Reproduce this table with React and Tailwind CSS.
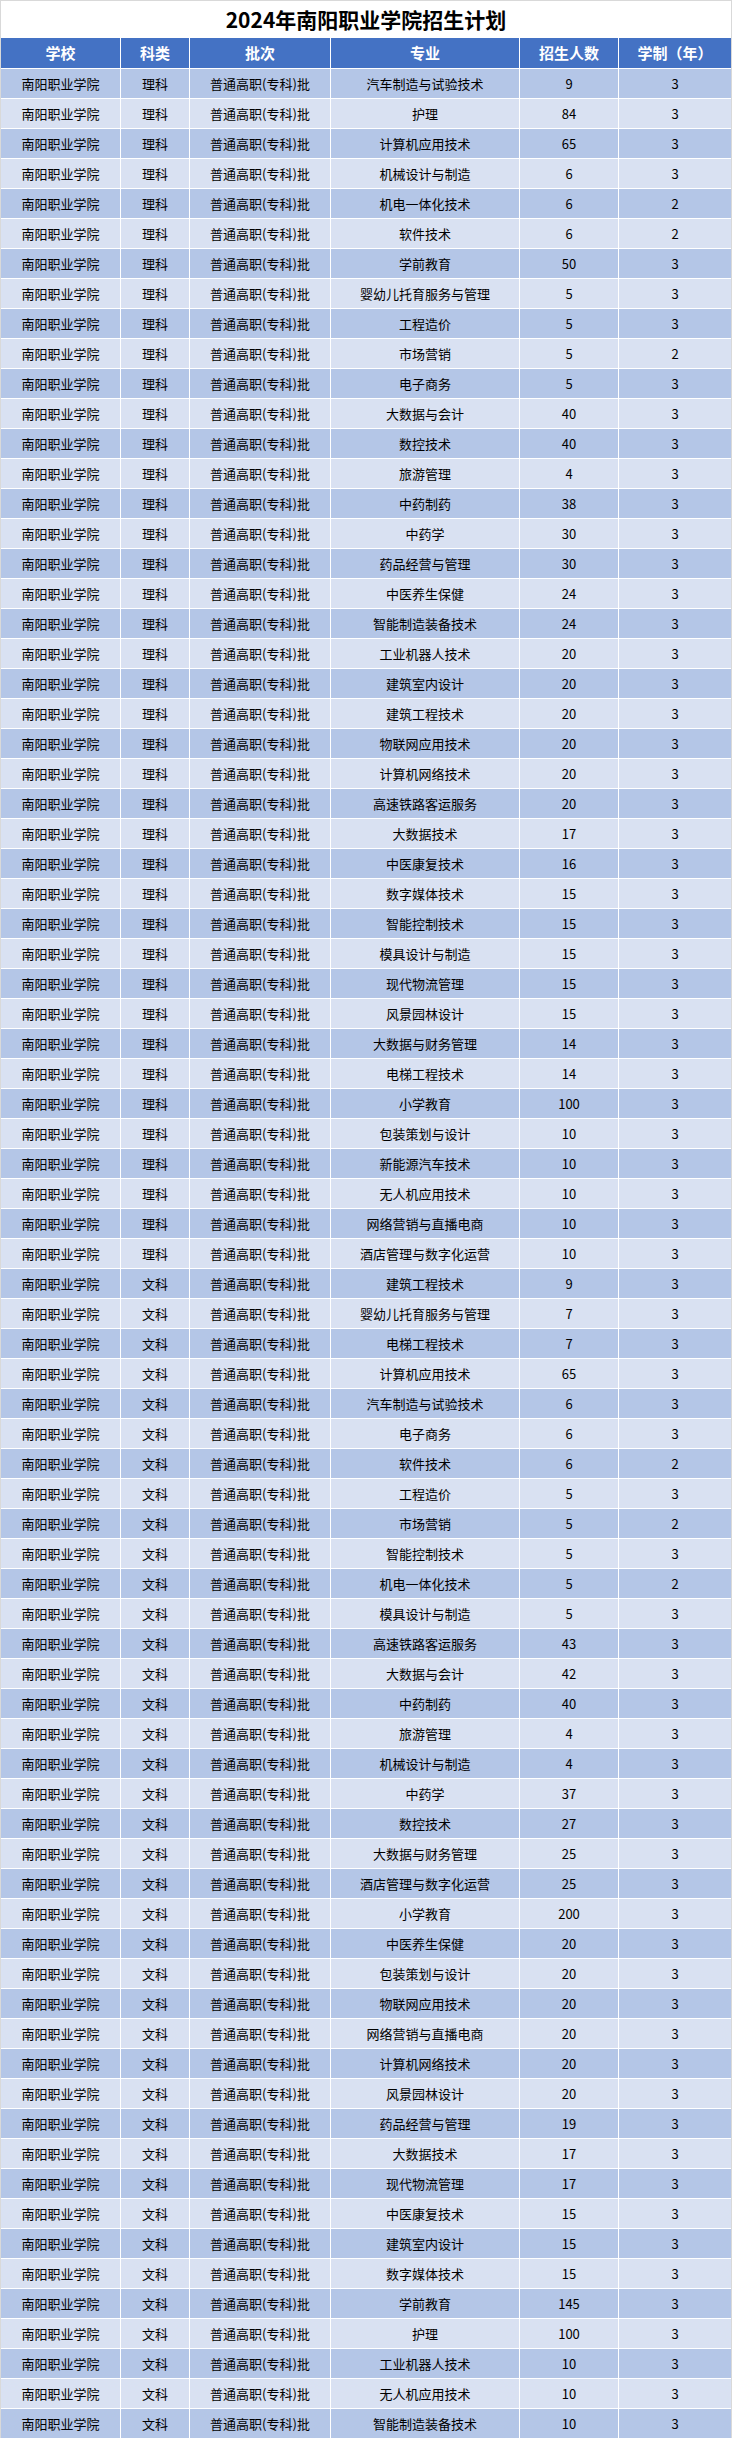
import React from "react";

const L = "理科";
const W = "文科";
const rows = [
  [L, "汽车制造与试验技术", 9, 3],
  [L, "护理", 84, 3],
  [L, "计算机应用技术", 65, 3],
  [L, "机械设计与制造", 6, 3],
  [L, "机电一体化技术", 6, 2],
  [L, "软件技术", 6, 2],
  [L, "学前教育", 50, 3],
  [L, "婴幼儿托育服务与管理", 5, 3],
  [L, "工程造价", 5, 3],
  [L, "市场营销", 5, 2],
  [L, "电子商务", 5, 3],
  [L, "大数据与会计", 40, 3],
  [L, "数控技术", 40, 3],
  [L, "旅游管理", 4, 3],
  [L, "中药制药", 38, 3],
  [L, "中药学", 30, 3],
  [L, "药品经营与管理", 30, 3],
  [L, "中医养生保健", 24, 3],
  [L, "智能制造装备技术", 24, 3],
  [L, "工业机器人技术", 20, 3],
  [L, "建筑室内设计", 20, 3],
  [L, "建筑工程技术", 20, 3],
  [L, "物联网应用技术", 20, 3],
  [L, "计算机网络技术", 20, 3],
  [L, "高速铁路客运服务", 20, 3],
  [L, "大数据技术", 17, 3],
  [L, "中医康复技术", 16, 3],
  [L, "数字媒体技术", 15, 3],
  [L, "智能控制技术", 15, 3],
  [L, "模具设计与制造", 15, 3],
  [L, "现代物流管理", 15, 3],
  [L, "风景园林设计", 15, 3],
  [L, "大数据与财务管理", 14, 3],
  [L, "电梯工程技术", 14, 3],
  [L, "小学教育", 100, 3],
  [L, "包装策划与设计", 10, 3],
  [L, "新能源汽车技术", 10, 3],
  [L, "无人机应用技术", 10, 3],
  [L, "网络营销与直播电商", 10, 3],
  [L, "酒店管理与数字化运营", 10, 3],
  [W, "建筑工程技术", 9, 3],
  [W, "婴幼儿托育服务与管理", 7, 3],
  [W, "电梯工程技术", 7, 3],
  [W, "计算机应用技术", 65, 3],
  [W, "汽车制造与试验技术", 6, 3],
  [W, "电子商务", 6, 3],
  [W, "软件技术", 6, 2],
  [W, "工程造价", 5, 3],
  [W, "市场营销", 5, 2],
  [W, "智能控制技术", 5, 3],
  [W, "机电一体化技术", 5, 2],
  [W, "模具设计与制造", 5, 3],
  [W, "高速铁路客运服务", 43, 3],
  [W, "大数据与会计", 42, 3],
  [W, "中药制药", 40, 3],
  [W, "旅游管理", 4, 3],
  [W, "机械设计与制造", 4, 3],
  [W, "中药学", 37, 3],
  [W, "数控技术", 27, 3],
  [W, "大数据与财务管理", 25, 3],
  [W, "酒店管理与数字化运营", 25, 3],
  [W, "小学教育", 200, 3],
  [W, "中医养生保健", 20, 3],
  [W, "包装策划与设计", 20, 3],
  [W, "物联网应用技术", 20, 3],
  [W, "网络营销与直播电商", 20, 3],
  [W, "计算机网络技术", 20, 3],
  [W, "风景园林设计", 20, 3],
  [W, "药品经营与管理", 19, 3],
  [W, "大数据技术", 17, 3],
  [W, "现代物流管理", 17, 3],
  [W, "中医康复技术", 15, 3],
  [W, "建筑室内设计", 15, 3],
  [W, "数字媒体技术", 15, 3],
  [W, "学前教育", 145, 3],
  [W, "护理", 100, 3],
  [W, "工业机器人技术", 10, 3],
  [W, "无人机应用技术", 10, 3],
  [W, "智能制造装备技术", 10, 3],
];

const font = {
  fontFamily: '"Noto Sans CJK SC", "Microsoft YaHei", sans-serif',
};

const cols = "grid grid-cols-[119px_68px_140px_188px_98px_112px] gap-x-px";

export default function App() {
  return (
    <div
      className="w-[732px] bg-white border-x border-t border-[#d9d9d9] text-black"
      style={font}
    >
      <div className="h-[37px] flex items-center justify-center text-[21px] font-bold leading-none">
        2024年南阳职业学院招生计划
      </div>
      <div className="flex flex-col gap-y-px bg-white">
        <div className={`${cols} h-[30px] text-white font-bold text-[15px]`}>
          {["学校", "科类", "批次", "专业", "招生人数", "学制（年）"].map((h) => (
            <div key={h} className="bg-[#4472c4] flex items-center justify-center">
              {h}
            </div>
          ))}
        </div>
        {rows.map((r, i) => {
          const bg = i % 2 === 0 ? "bg-[#b4c6e7]" : "bg-[#d9e1f2]";
          const cells = ["南阳职业学院", r[0], "普通高职(专科)批", r[1], r[2], r[3]];
          return (
            <div key={i} className={`${cols} h-[29px] text-[13px]`}>
              {cells.map((c, j) => (
                <div
                  key={j}
                  className={`${bg} flex items-center justify-center whitespace-nowrap overflow-hidden`}
                >
                  {c}
                </div>
              ))}
            </div>
          );
        })}
      </div>
    </div>
  );
}
